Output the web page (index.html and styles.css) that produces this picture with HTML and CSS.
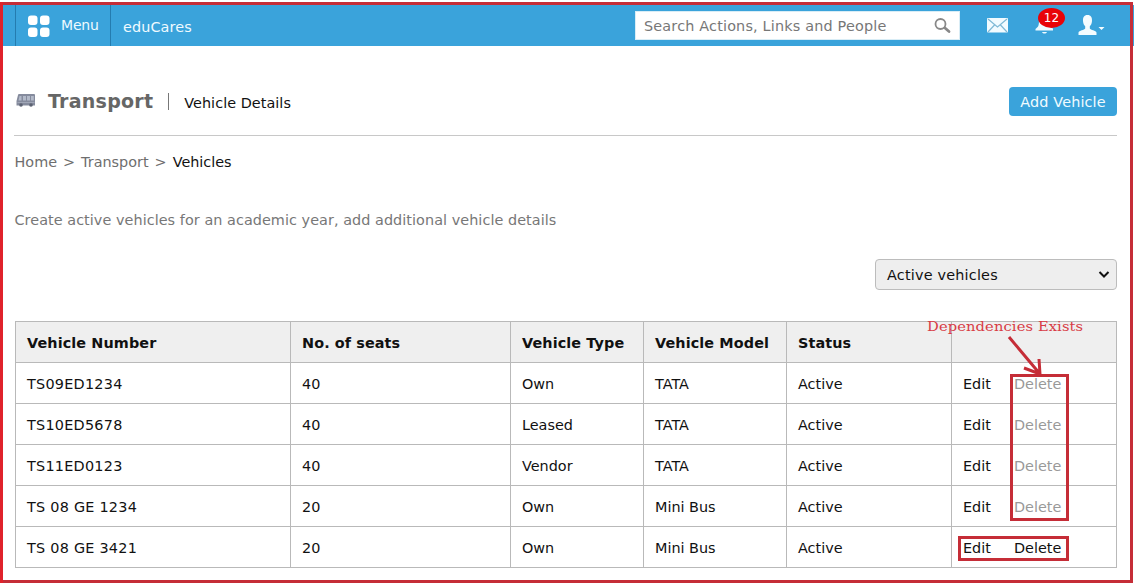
FILE: index.html
```html
<!DOCTYPE html>
<html lang="en">
<head>
<meta charset="utf-8">
<title>Transport - Vehicle Details</title>
<link rel="stylesheet" href="styles.css">
</head>
<body>
<header class="topbar">
  <div class="menu">
    <svg class="menu-icon" width="22" height="23" viewBox="0 0 22 23" fill="#fff"><rect y=".5" width="9.500" height="9.500" rx="3"/><rect x="12" y=".5" width="9.500" height="9.500" rx="3"/><rect y="12.5" width="9.500" height="9.500" rx="3"/><rect x="12" y="12.5" width="9.500" height="9.500" rx="3"/></svg>
    <span class="menu-label">Menu</span>
  </div>
  <span class="brand">eduCares</span>
  <div class="search">
    <span class="search-text">Search Actions, Links and People</span>
    <svg width="17" height="17" viewBox="0 0 17 17" fill="none" stroke="#888"><circle cx="6.5" cy="6" r="5" stroke-width="1.8"/><path d="M11 10l4 3.500" stroke-width="2.800" stroke-linecap="round"/></svg>
  </div>
  <svg class="mail" width="21" height="15" viewBox="0 0 21 15"><rect width="21" height="14.500" rx="1" fill="#f2fbff"/><path d="M1 1l9.5 8L20 1M1 14l6.5-7M20 14l-6.5-7" fill="none" stroke="#7fb9d6" stroke-width="1.2"/></svg>
  <div class="alerts">
    <svg width="20" height="23" viewBox="0 0 20 23" fill="#eefaff"><path d="M10 2C5 2 4 6 4 10c0 5-1 6-3.500 8v1.500h17.500V18C17 16 16 15 16 10c0-4-1-8-6-8zM7 21h5c-1 2-4 2-5 0z"/></svg>
    <span class="count">12</span>
  </div>
  <svg class="user" width="28" height="21" viewBox="0 0 28 21" fill="#f4fcff"><path d="M9.500 0C6 0 4.800 2.500 5 6c.2 2.500 1 4.200 2.200 5.300v2.200C6.500 15 1 15.500.5 17.500V20h18v-2.500c-.5-2-6-2.500-6.700-4v-2.200C13 10.200 13.800 8.500 14 6c.2-3.500-1-6-4.500-6zM20.500 12h6l-3 3z"/></svg>
</header>
<main class="page">
  <div class="heading">
    <svg class="bus" width="20" height="15" viewBox="0 0 20 15"><path d="M3 1h15q1 0 1 1v10.500H.5V8L2 2q.2-1 1-1z" fill="#858b9d"/><path d="M3.500 3h2v4.500H2.500zM7 3h3v4.500H7zM11 3h3v4.500h-3zM15 3h2.800v4.500H15z" fill="#b3bac9"/><path d="M1.500 9.500h17" stroke="#a0a6b6"/><circle cx="5" cy="12" r="1.800" fill="#5d6373"/><circle cx="15" cy="12" r="1.800" fill="#5d6373"/></svg>
    <h1 class="title">Transport</h1>
    <span class="divider"></span>
    <span class="subtitle">Vehicle Details</span>
    <button class="add">Add Vehicle</button>
  </div>
  <nav class="crumbs"><span>Home</span><span>&gt;</span><span class="crumb-link">Transport</span><span>&gt;</span><span class="current">Vehicles</span></nav>
  <p class="hint">Create active vehicles for an academic year, add additional vehicle details</p>
  <div class="filter"><span>Active vehicles</span><svg width="12" height="8" viewBox="0 0 12 8" fill="none" stroke="#111" stroke-width="2"><path d="M1.500 1L6 5.500l4.500-4.500"/></svg></div>
  <table class="vehicles">
    <colgroup><col class="c-number"><col class="c-seats"><col class="c-type"><col class="c-model"><col class="c-status"><col class="c-actions"></colgroup>
    <thead><tr><th>Vehicle Number</th><th>No. of seats</th><th>Vehicle Type</th><th>Vehicle Model</th><th>Status</th><th></th></tr></thead>
    <tbody>
      <tr><td class="number">TS09ED1234</td><td>40</td><td>Own</td><td>TATA</td><td>Active</td><td><span class="edit">Edit</span><span class="disabled">Delete</span></td></tr>
      <tr><td class="number">TS10ED5678</td><td>40</td><td>Leased</td><td>TATA</td><td>Active</td><td><span class="edit">Edit</span><span class="disabled">Delete</span></td></tr>
      <tr><td class="number">TS11ED0123</td><td>40</td><td>Vendor</td><td>TATA</td><td>Active</td><td><span class="edit">Edit</span><span class="disabled">Delete</span></td></tr>
      <tr><td class="number">TS 08 GE 1234</td><td>20</td><td>Own</td><td>Mini Bus</td><td>Active</td><td><span class="edit">Edit</span><span class="disabled">Delete</span></td></tr>
      <tr><td class="number">TS 08 GE 3421</td><td>20</td><td>Own</td><td>Mini Bus</td><td>Active</td><td><span class="edit">Edit</span><span>Delete</span></td></tr>
    </tbody>
  </table>
</main>
<svg class="marks" width="1134" height="584" viewBox="0 0 1134 584" fill="none" stroke="#c52d37" stroke-width="3">
  <path d="M0 3.500h1133M1131.500 2v581M0 581.500h1133"/>
  <path d="M1.500 2v581" stroke="#e0222b"/>
  <rect x="1011.500" y="375.500" width="56" height="144"/>
  <rect x="959.500" y="537.500" width="108" height="22"/>
  <path d="M1009 337l31 37M1024 368l16 6-1-15"/>
</svg>
<span class="note">Dependencies Exists</span>
</body>
</html>
```
FILE: styles.css
```css
* { box-sizing: border-box; }
body {
  margin: 0;
  width: 1134px;
  height: 584px;
  overflow: hidden;
  position: relative;
  background: #fff;
  color: #111;
  font: 14.4px/20px Verdana, "DejaVu Sans", sans-serif;
}
.topbar {
  display: flex;
  height: 41px;
  margin: 5px 0 0 3px;
  background: #3aa3db;
  color: #effaff;
}
.menu {
  display: flex;
  width: 96px;
  margin-left: 12px;
  padding: 10px 0 0 12px;
  border-left: 1px solid #247caf;
  border-right: 1px solid #247caf;
}
.menu-icon { flex: none; margin-right: 11px; }
.menu-label { font-size: 14px; letter-spacing: -0.2px; }
.brand { width: 80px; margin: 12px 0 0 12px; letter-spacing: 0.1px; }
.search {
  display: flex;
  justify-content: space-between;
  width: 325px;
  height: 29px;
  margin: 6px 0 0 auto;
  padding: 6px 8px 0;
  border: 1px solid #d9edf6;
  background: #fff;
  color: #777;
}
.search-text { margin-top: -2px; letter-spacing: 0.18px; white-space: nowrap; }
.mail { margin: 13px 0 0 27px; }
.alerts { position: relative; width: 20px; margin: 6px 0 0 27px; }
.count {
  position: absolute;
  left: 3px;
  top: -3px;
  width: 27px;
  height: 20px;
  border-radius: 50%;
  background: #e80308;
  color: #fff;
  font-size: 12px;
  text-align: center;
}
.user { margin: 10px 28px 0 23px; }
.page { width: 1103px; margin-left: 14px; }
.heading {
  display: flex;
  height: 90px;
  padding-top: 41px;
  border-bottom: 1px solid #c8c8c8;
}
.bus { margin: 6px 0 0 2px; }
.title {
  margin: 1px 0 0 12px;
  color: #666;
  font-size: 19px;
  line-height: 26px;
  letter-spacing: 0.25px;
}
.divider { width: 1px; height: 17px; margin: 6px 15px 0 15px; background: #777; }
.subtitle { margin-top: 6px; letter-spacing: 0.05px; }
.add {
  width: 108px;
  height: 29px;
  margin-left: auto;
  padding: 0;
  border: 0;
  border-radius: 4px;
  background: #3aa3db;
  color: #f1fbff;
  font: inherit;
  line-height: 31px;
  letter-spacing: 0.15px;
}
.crumbs {
  display: flex;
  gap: 6px;
  margin-top: 16px;
  padding-left: 0.5px;
  color: #6e6e6e;
}
.current { color: #111; }
.hint {
  margin: 38px 0 0 0.5px;
  color: #777;
  letter-spacing: 0.055px;
  white-space: nowrap;
}
.filter {
  display: flex;
  justify-content: space-between;
  align-items: center;
  width: 242px;
  height: 31px;
  margin: 29px 0 31px auto;
  padding: 0 6px 0 11px;
  border: 1px solid #bcbcbc;
  border-radius: 4px;
  background: #eee;
  letter-spacing: 0.2px;
}
.vehicles {
  width: 1102px;
  margin-left: 1px;
  border-collapse: collapse;
  table-layout: fixed;
}
.c-number { width: 275px; }
.c-seats { width: 220px; }
.c-type { width: 133px; }
.c-model { width: 143px; }
.c-status, .c-actions { width: 165px; }
.vehicles th, .vehicles td {
  height: 41px;
  padding: 1px 11px 0;
  border: 1px solid #b9b9b9;
  text-align: left;
  white-space: nowrap;
}
.vehicles th { background: #efefef; letter-spacing: 0.1px; }
.vehicles .number { letter-spacing: 0.25px; }
.edit { display: inline-block; width: 51px; }
.disabled { color: #999; }
.marks { position: absolute; left: 0; top: 0; }
.note {
  position: absolute;
  left: 927px;
  top: 317px;
  color: #d83c46;
  font: 13px/20px "DejaVu Serif", serif;
  letter-spacing: 0.1px;
  white-space: nowrap;
  transform: scaleX(1.13);
  transform-origin: left;
}
```
